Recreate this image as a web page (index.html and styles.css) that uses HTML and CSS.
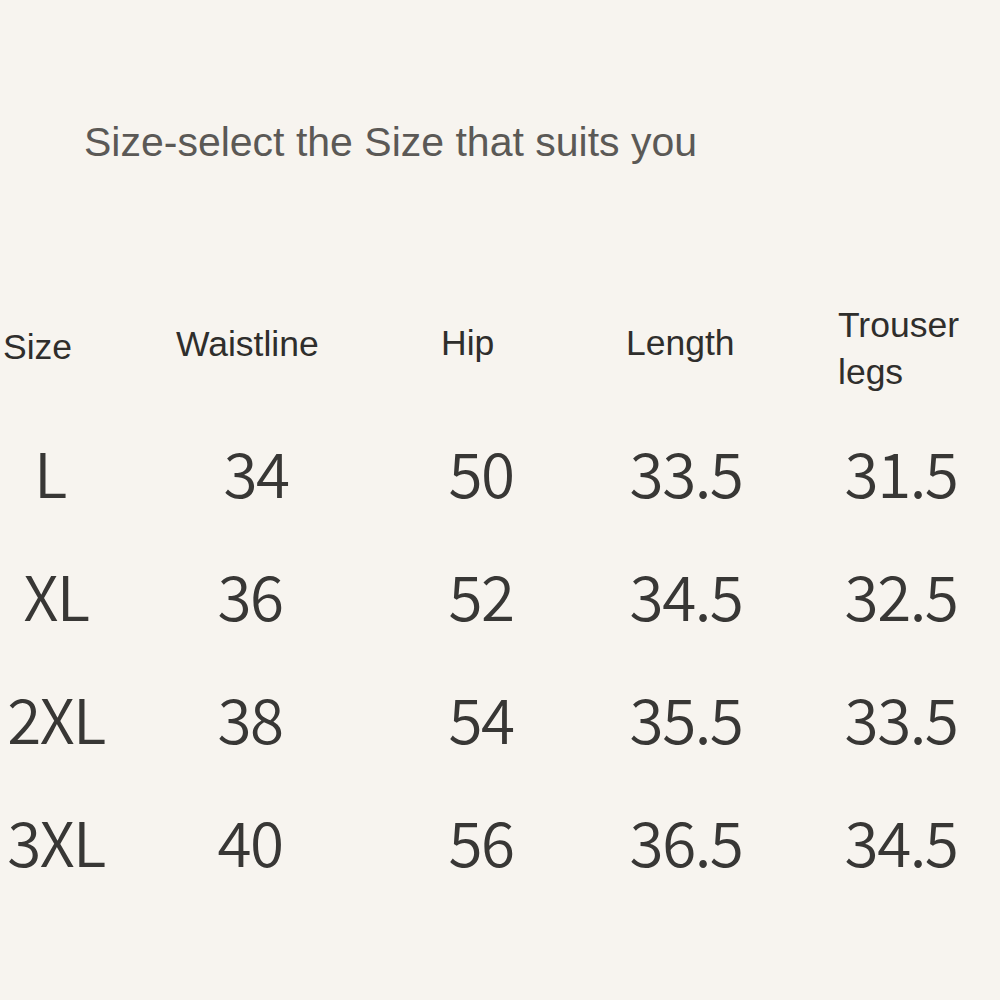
FILE: index.html
```html
<!DOCTYPE html>
<html lang="en">
<head>
<meta charset="utf-8">
<title>Size chart</title>
<link rel="stylesheet" href="styles.css">
</head>
<body>
<main class="page">
  <h1 class="title">Size-select the Size that suits you</h1>
  <div class="chart">
    <div class="head h-size">Size</div>
    <div class="head h-waist">Waistline</div>
    <div class="head h-hip">Hip</div>
    <div class="head h-length">Length</div>
    <div class="head h-legs">Trouser<br>legs</div>

    <div class="cell size nudge-left">L</div>
    <div class="cell nudge-right">34</div>
    <div class="cell">50</div>
    <div class="cell">33.5</div>
    <div class="cell">31.5</div>

    <div class="cell size">XL</div>
    <div class="cell">36</div>
    <div class="cell">52</div>
    <div class="cell">34.5</div>
    <div class="cell">32.5</div>

    <div class="cell size">2XL</div>
    <div class="cell">38</div>
    <div class="cell">54</div>
    <div class="cell">35.5</div>
    <div class="cell">33.5</div>

    <div class="cell size">3XL</div>
    <div class="cell">40</div>
    <div class="cell">56</div>
    <div class="cell">36.5</div>
    <div class="cell">34.5</div>
  </div>
</main>
</body>
</html>
```

FILE: styles.css
```css
html, body {
  margin: 0;
  padding: 0;
  background: #f7f4ef;
}
body {
  width: 1000px;
  height: 1000px;
  overflow: hidden;
}
.page {
  padding-top: 119px;
}
.title {
  margin: 0 0 0 84px;
  font-family: "Liberation Sans", Arial, sans-serif;
  font-weight: 400;
  font-size: 41px;
  line-height: normal;
  color: #5b5956;
  white-space: nowrap;
}
.chart {
  margin-top: 125px;
  display: grid;
  grid-template-columns: 112px 276px 186px 224px 206px;
  grid-template-rows: auto repeat(4, 123px);
  align-items: center;
}
.head {
  font-family: "Liberation Sans", Arial, sans-serif;
  font-size: 35.5px;
  line-height: 47px;
  color: #2f2e2c;
  white-space: nowrap;
  margin-bottom: 14px;
}
.h-size { padding-left: 3px; padding-top: 8px; }
.h-waist { padding-left: 64px; padding-top: 2px; }
.h-hip { padding-left: 53px; }
.h-length { padding-left: 52px; }
.h-legs { padding-left: 40px; padding-top: 11px; }
.cell {
  font-family: "Noto Sans CJK SC", "Noto Sans", sans-serif;
  font-weight: 350;
  font-size: 62px;
  letter-spacing: -1.5px;
  line-height: 123px;
  color: #383735;
  text-align: center;
  white-space: nowrap;
}
.nudge-left { padding-right: 12px; }
.nudge-right { padding-left: 12px; }
```
